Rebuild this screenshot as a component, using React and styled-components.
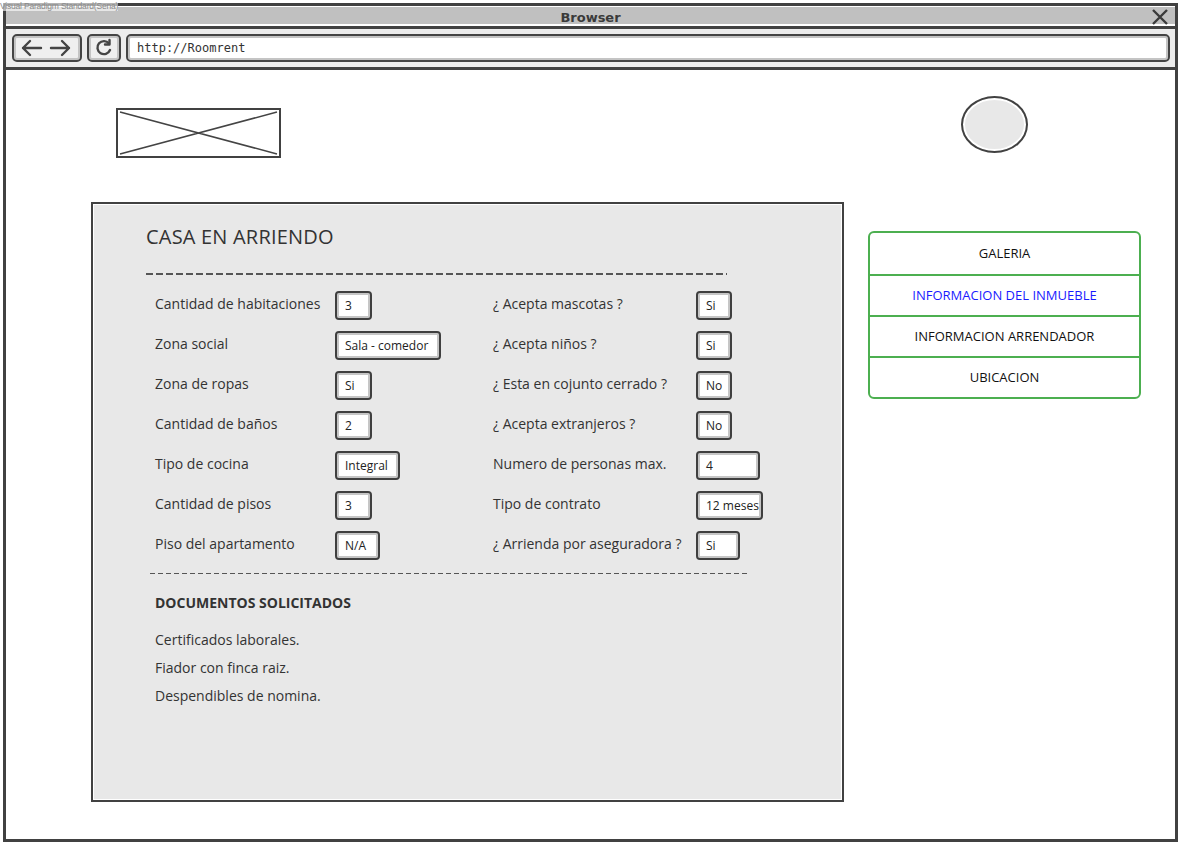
import React from 'react';
import styled, { createGlobalStyle } from 'styled-components';

const GlobalStyle = createGlobalStyle`
  html, body {
    margin: 0;
    padding: 0;
    background: #ffffff;
  }
  * {
    box-sizing: border-box;
  }
`;

const font = `"Open Sans", "DejaVu Sans", sans-serif`;

const leftRows = [
  { label: 'Cantidad de habitaciones', value: '3', w: 37 },
  { label: 'Zona social', value: 'Sala - comedor', w: 106 },
  { label: 'Zona de ropas', value: 'Si', w: 37 },
  { label: 'Cantidad de baños', value: '2', w: 37 },
  { label: 'Tipo de cocina', value: 'Integral', w: 65 },
  { label: 'Cantidad de pisos', value: '3', w: 37 },
  { label: 'Piso del apartamento', value: 'N/A', w: 45 },
];

const rightRows = [
  { label: '¿ Acepta mascotas ?', value: 'Si', w: 36 },
  { label: '¿ Acepta niños ?', value: 'Si', w: 36 },
  { label: '¿ Esta en cojunto cerrado ?', value: 'No', w: 36 },
  { label: '¿ Acepta extranjeros ?', value: 'No', w: 36 },
  { label: 'Numero de personas max.', value: '4', w: 64 },
  { label: 'Tipo de contrato', value: '12 meses', w: 67 },
  { label: '¿ Arrienda por aseguradora ?', value: 'Si', w: 44 },
];

const navItems = ['GALERIA', 'INFORMACION DEL INMUEBLE', 'INFORMACION ARRENDADOR', 'UBICACION'];

const docs = ['Certificados laborales.', 'Fiador con finca raiz.', 'Despendibles de nomina.'];

const App = () => {
  return (
    <Page>
      <GlobalStyle />
      <Watermark>Visual Paradigm Standard(Sena)</Watermark>
      <Frame>
        <TitleBar>
          <span>Browser</span>
          <CloseIcon viewBox="0 0 18 18">
            <path d="M2 2 L16 16 M16 2 L2 16" />
          </CloseIcon>
        </TitleBar>
        <Toolbar>
          <NavButton $w={70}>
            <svg width="56" height="20" viewBox="0 0 56 20">
              <g fill="none" stroke="#444" strokeWidth="2.4" strokeLinecap="round" strokeLinejoin="round">
                <path d="M4 10 H22 M11 3 L4 10 L11 17" />
                <path d="M32 10 H50 M43 3 L50 10 L43 17" />
              </g>
            </svg>
          </NavButton>
          <NavButton $w={34}>
            <svg width="20" height="20" viewBox="0 0 20 20">
              <g fill="none" stroke="#444" strokeWidth="2.4" strokeLinecap="round" strokeLinejoin="round">
                <path d="M15 5.5 A6.5 6.5 0 1 0 16 12" />
                <path d="M15.5 2 V6.5 H11" />
              </g>
            </svg>
          </NavButton>
          <UrlBar>http://Roomrent</UrlBar>
        </Toolbar>
        <Content>
          <Header>
            <LogoBox>
              <svg width="100%" height="100%" viewBox="0 0 160 45" preserveAspectRatio="none">
                <path d="M2 2 L158 43 M158 2 L2 43" stroke="#444" strokeWidth="1.5" />
              </svg>
            </LogoBox>
            <Avatar />
          </Header>
          <Main>
            <Panel>
              <Title>CASA EN ARRIENDO</Title>
              <Dashes $w={581} $dash={7} $gap={3} $h={1.5} $ml={0} $mt={23} />
              <Grid>
                {leftRows.map((l, i) => (
                  <React.Fragment key={l.label}>
                    <Label>{l.label}</Label>
                    <Cell><Field $w={l.w}>{l.value}</Field></Cell>
                    <Label>{rightRows[i].label}</Label>
                    <Cell><Field $w={rightRows[i].w}>{rightRows[i].value}</Field></Cell>
                  </React.Fragment>
                ))}
              </Grid>
              <Dashes $w={599} $dash={5} $gap={3} $h={1} $ml={4} $mt={2} />
              <DocsTitle>DOCUMENTOS SOLICITADOS</DocsTitle>
              <DocList>
                {docs.map((d) => (
                  <DocItem key={d}>{d}</DocItem>
                ))}
              </DocList>
            </Panel>
            <SideNav>
              {navItems.map((n, i) => (
                <NavItem key={n} $active={i === 1}>{n}</NavItem>
              ))}
            </SideNav>
          </Main>
        </Content>
      </Frame>
    </Page>
  );
};

const Page = styled.div`
  position: relative;
  width: 1182px;
  height: 846px;
  padding: 3px 4px 4px 3px;
  font-family: ${font};
  color: #333;
`;

const Watermark = styled.div`
  position: absolute;
  left: 0;
  top: 2px;
  font-family: "Liberation Sans", Arial, sans-serif;
  font-size: 8.5px;
  color: #8a8a8a;
  letter-spacing: -0.2px;
  background: rgba(255, 255, 255, 0.6);
  line-height: 9px;
  z-index: 2;
`;

const Frame = styled.div`
  height: 100%;
  border: 3px solid #414141;
  display: flex;
  flex-direction: column;
`;

const TitleBar = styled.div`
  position: relative;
  margin: 1px 0 3px;
  height: 19px;
  padding-top: 3px;
  background: #c0c0c0;
  display: flex;
  align-items: center;
  justify-content: center;
  font-family: "DejaVu Sans", sans-serif;
  font-weight: bold;
  font-size: 13px;
  color: #3a3a3a;
  border-bottom: 2px solid #ffffff;
  box-shadow: 0 3px 0 #414141;
`;

const CloseIcon = styled.svg`
  position: absolute;
  right: 6px;
  top: 1px;
  width: 18px;
  height: 18px;
  stroke: #3a3a3a;
  stroke-width: 2.4;
  fill: none;
`;

const Toolbar = styled.div`
  display: flex;
  align-items: center;
  gap: 5px;
  height: 41px;
  padding: 0 5px 0 6px;
  background: #ececec;
  border-bottom: 3px solid #414141;
`;

const NavButton = styled.div`
  width: ${(p) => p.$w}px;
  height: 28px;
  border: 2px solid #444;
  border-radius: 5px;
  background: #efefef;
  box-shadow: inset 0 0 0 2px #c4c4c4;
  display: flex;
  align-items: center;
  justify-content: center;
`;

const UrlBar = styled.div`
  flex: 1;
  height: 28px;
  border: 2px solid #444;
  border-radius: 5px;
  background: #fff;
  box-shadow: inset 0 0 0 2px #c4c4c4;
  display: flex;
  align-items: center;
  padding-left: 9px;
  font-family: "DejaVu Sans Mono", "Liberation Mono", monospace;
  font-size: 12px;
  color: #333;
`;

const Content = styled.div`
  flex: 1;
  background: #fff;
`;

const Header = styled.div`
  height: 132px;
  display: flex;
  justify-content: space-between;
  align-items: flex-start;
  padding: 0 147px 0 110px;
`;

const LogoBox = styled.div`
  margin-top: 38px;
  width: 165px;
  height: 50px;
  border: 2px solid #414141;
  background: #fff;
`;

const Avatar = styled.div`
  margin-top: 26px;
  width: 67px;
  height: 57px;
  border: 2px solid #414141;
  border-radius: 50%;
  background: #e8e8e8;
  box-shadow: inset 0 0 0 2px #fff;
`;

const Main = styled.div`
  display: flex;
  align-items: flex-start;
  gap: 24px;
  padding-left: 85px;
`;

const Panel = styled.div`
  width: 753px;
  height: 600px;
  border: 2px solid #414141;
  background: #e8e8e8;
  box-shadow: inset 0 0 0 1px #fff;
  padding: 20px 0 0 53px;
`;

const Title = styled.div`
  font-size: 20px;
  line-height: 26px;
  color: #333;
  letter-spacing: 0.2px;
`;

const Dashes = styled.div`
  width: ${(p) => p.$w}px;
  height: ${(p) => p.$h}px;
  margin-left: ${(p) => p.$ml}px;
  margin-top: ${(p) => p.$mt}px;
  background-image: repeating-linear-gradient(
    to right,
    #555 0,
    #555 ${(p) => p.$dash}px,
    transparent ${(p) => p.$dash}px,
    transparent ${(p) => p.$dash + p.$gap}px
  );
`;

const Grid = styled.div`
  display: grid;
  grid-template-columns: 180px 158px 203px auto;
  grid-auto-rows: 40px;
  margin: 16px 0 0 9px;
`;

const Label = styled.div`
  font-size: 14px;
  line-height: 20px;
  padding-top: 3px;
  color: #333;
  white-space: nowrap;
`;

const Cell = styled.div`
  display: flex;
  align-items: flex-start;
`;

const Field = styled.div`
  width: ${(p) => p.$w}px;
  height: 29px;
  border: 2px solid #3f3f3f;
  border-radius: 4px;
  background: #fff;
  box-shadow: inset 0 0 0 2px #c6c6c6;
  font-size: 12px;
  line-height: 25px;
  padding-left: 8px;
  color: #222;
  white-space: nowrap;
  overflow: hidden;
`;

const DocsTitle = styled.div`
  margin: 19px 0 0 9px;
  font-size: 14px;
  font-weight: bold;
  line-height: 20px;
  color: #333;
`;

const DocList = styled.div`
  margin: 17px 0 0 9px;
  display: flex;
  flex-direction: column;
  gap: 8px;
`;

const DocItem = styled.div`
  font-size: 14px;
  line-height: 20px;
  color: #333;
`;

const SideNav = styled.div`
  margin-top: 29px;
  width: 273px;
  border: 2px solid #4caf50;
  border-radius: 6px;
  background: #fff;
  overflow: hidden;
`;

const NavItem = styled.div`
  height: 41px;
  display: flex;
  align-items: center;
  justify-content: center;
  padding-bottom: 2px;
  font-size: 13px;
  color: ${(p) => (p.$active ? '#1a1aff' : '#111')};
  & + & {
    border-top: 2px solid #4caf50;
  }
`;

export default App;
